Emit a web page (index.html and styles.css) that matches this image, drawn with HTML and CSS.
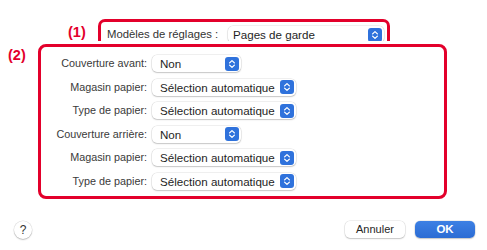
FILE: index.html
```html
<!DOCTYPE html>
<html lang="fr">
<head>
  <meta charset="UTF-8">
  <meta name="viewport" content="width=device-width, initial-scale=1.0">
  <title>Pages de garde</title>
  <link rel="stylesheet" href="styles.css">
</head>
<body>

<div class="dialog">

  <!-- (1) Preset selector -->
  <div class="preset-row">
    <span class="callout">(1)</span>
    <div class="frame frame-top">
      <span class="preset-label">Modèles de réglages :</span>
      <div class="popup popup-preset">
        <span>Pages de garde</span>
        <svg class="stepper" width="14" height="14" viewBox="0 0 14 14"><rect width="14" height="14" rx="3"/><path d="M4.6 5.9 7 3.6 9.4 5.9M4.6 8.1 7 10.4 9.4 8.1"/></svg>
      </div>
    </div>
  </div>

  <!-- (2) Cover options -->
  <div class="options-row">
    <span class="callout">(2)</span>
    <div class="frame frame-options">
      <div class="option-grid">
        <span class="option-label">Couverture avant:</span>
        <div class="popup popup-short">
          <span>Non</span>
          <svg class="stepper" width="14" height="14" viewBox="0 0 14 14"><rect width="14" height="14" rx="3"/><path d="M4.6 5.9 7 3.6 9.4 5.9M4.6 8.1 7 10.4 9.4 8.1"/></svg>
        </div>

        <span class="option-label">Magasin papier:</span>
        <div class="popup popup-long">
          <span>Sélection automatique</span>
          <svg class="stepper" width="14" height="14" viewBox="0 0 14 14"><rect width="14" height="14" rx="3"/><path d="M4.6 5.9 7 3.6 9.4 5.9M4.6 8.1 7 10.4 9.4 8.1"/></svg>
        </div>

        <span class="option-label">Type de papier:</span>
        <div class="popup popup-long">
          <span>Sélection automatique</span>
          <svg class="stepper" width="14" height="14" viewBox="0 0 14 14"><rect width="14" height="14" rx="3"/><path d="M4.6 5.9 7 3.6 9.4 5.9M4.6 8.1 7 10.4 9.4 8.1"/></svg>
        </div>

        <span class="option-label">Couverture arrière:</span>
        <div class="popup popup-short">
          <span>Non</span>
          <svg class="stepper" width="14" height="14" viewBox="0 0 14 14"><rect width="14" height="14" rx="3"/><path d="M4.6 5.9 7 3.6 9.4 5.9M4.6 8.1 7 10.4 9.4 8.1"/></svg>
        </div>

        <span class="option-label">Magasin papier:</span>
        <div class="popup popup-long">
          <span>Sélection automatique</span>
          <svg class="stepper" width="14" height="14" viewBox="0 0 14 14"><rect width="14" height="14" rx="3"/><path d="M4.6 5.9 7 3.6 9.4 5.9M4.6 8.1 7 10.4 9.4 8.1"/></svg>
        </div>

        <span class="option-label">Type de papier:</span>
        <div class="popup popup-long">
          <span>Sélection automatique</span>
          <svg class="stepper" width="14" height="14" viewBox="0 0 14 14"><rect width="14" height="14" rx="3"/><path d="M4.6 5.9 7 3.6 9.4 5.9M4.6 8.1 7 10.4 9.4 8.1"/></svg>
        </div>
      </div>
    </div>
  </div>

  <!-- Footer -->
  <div class="footer">
    <button class="help-btn">?</button>
    <div class="actions">
      <button class="btn">Annuler</button>
      <button class="btn btn-primary">OK</button>
    </div>
  </div>

</div>

</body>
</html>
```

FILE: styles.css
```css
/* General Styles */
body {
  margin: 0;
  padding: 0;
  width: 487px;
  height: 250px;
  background-color: #fff;
  font-family: 'Liberation Sans', Arial, sans-serif;
  font-size: 11px;
  color: #262626;
  overflow: hidden;
}

.dialog {
  padding-top: 19px;
}

/* Red callouts */
.callout {
  flex: 0 0 30px;
  color: #e3002b;
  font-size: 14.5px;
  font-weight: bold;
  line-height: 14px;
}

.frame {
  box-sizing: border-box;
  border: 3px solid #e3002b;
}

/* (1) Preset row */
.preset-row {
  display: flex;
  margin-left: 68px;
  height: 22px;
}

.preset-row .callout {
  padding-top: 6px;
}

.frame-top {
  width: 292px;
  height: 22px;
  border-bottom: none;
  border-radius: 7px 7px 0 0;
  display: flex;
  align-items: flex-start;
  padding: 4px 0 0 6px;
  overflow: hidden;
}

.preset-label {
  flex: 0 0 121px;
  font-size: 11.3px;
  line-height: 17px;
  color: #333;
}

/* Popup buttons */
.popup {
  box-sizing: border-box;
  height: 17px;
  display: flex;
  align-items: center;
  justify-content: space-between;
  padding: 0 2px 0 8px;
  background: #fff;
  border-radius: 5px;
  box-shadow: 0 0 0 0.5px rgba(0, 0, 0, 0.12), 0 1px 1.5px rgba(0, 0, 0, 0.18);
  font-size: 11.6px;
  line-height: 17px;
  white-space: nowrap;
  color: #1e1e1e;
}

.popup-preset {
  width: 156px;
  padding-left: 5px;
}

.popup-short {
  width: 89px;
}

.popup-long {
  width: 144px;
}

.stepper rect {
  fill: #2f72dc;
}

.stepper path {
  fill: none;
  stroke: #fff;
  stroke-width: 1.3;
  stroke-linecap: round;
  stroke-linejoin: round;
}

/* (2) Options */
.options-row {
  display: flex;
  margin: 3px 0 0 8px;
}

.options-row .callout {
  padding-top: 4px;
}

.frame-options {
  width: 409px;
  height: 155px;
  border-radius: 8px;
  padding-top: 8px;
}

.option-grid {
  display: grid;
  grid-template-columns: 106px auto;
  grid-auto-rows: 17px;
  column-gap: 5px;
  row-gap: 6.6px;
  align-items: center;
  justify-items: start;
}

.option-label {
  justify-self: end;
  font-size: 10.8px;
  line-height: 17px;
  color: #3a3a3a;
}

/* Footer */
.footer {
  display: flex;
  justify-content: space-between;
  align-items: flex-start;
  margin-top: 22px;
  padding: 0 12px 0 14px;
}

button {
  font-family: inherit;
  font-size: 11px;
  margin: 0;
  border: none;
  cursor: pointer;
}

.help-btn {
  width: 18px;
  height: 18px;
  padding: 0;
  border-radius: 50%;
  background: #fff;
  color: #333;
  font-size: 12px;
  box-shadow: 0 0 0 0.5px rgba(0, 0, 0, 0.12), 0 1px 1.5px rgba(0, 0, 0, 0.2);
}

.actions {
  display: flex;
  gap: 10px;
}

.btn {
  width: 60px;
  height: 17px;
  padding: 0;
  border-radius: 5px;
  background: #fff;
  color: #262626;
  line-height: 17px;
  box-shadow: 0 0 0 0.5px rgba(0, 0, 0, 0.12), 0 1px 1.5px rgba(0, 0, 0, 0.18);
}

.btn-primary {
  background: linear-gradient(#3d80e4, #2b6cd4);
  color: #fff;
  font-size: 11.5px;
  font-weight: 600;
}
```
